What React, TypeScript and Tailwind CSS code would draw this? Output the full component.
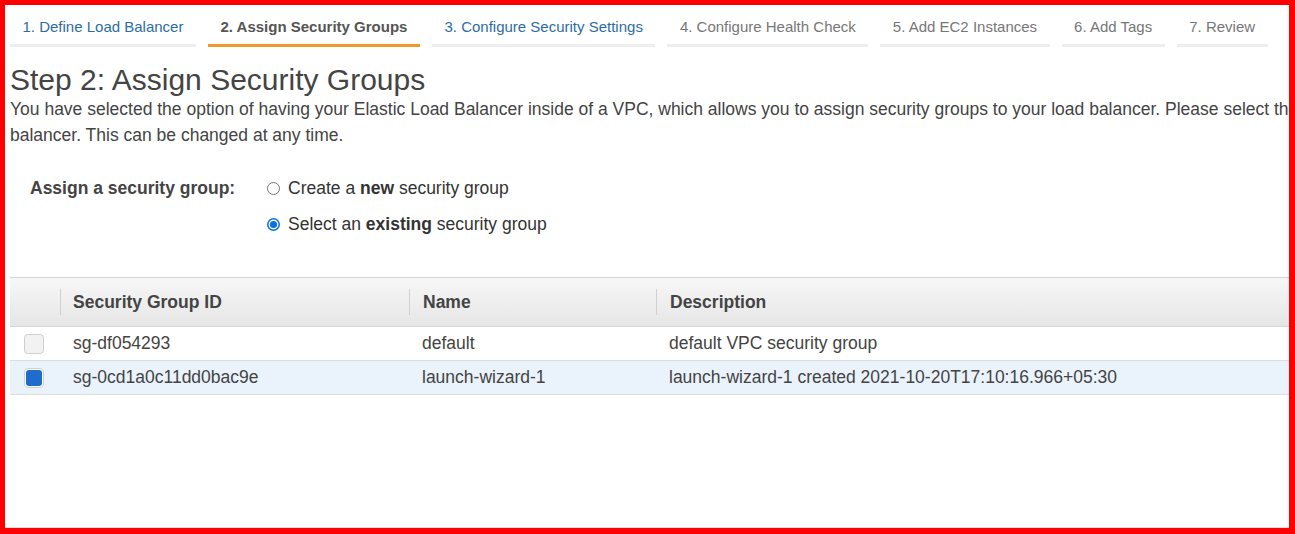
import React from 'react';

const tabs = [
  { label: '1. Define Load Balancer', state: 'link' },
  { label: '2. Assign Security Groups', state: 'active' },
  { label: '3. Configure Security Settings', state: 'link' },
  { label: '4. Configure Health Check', state: 'idle' },
  { label: '5. Add EC2 Instances', state: 'idle' },
  { label: '6. Add Tags', state: 'idle' },
  { label: '7. Review', state: 'idle' },
];

const rows = [
  { id: 'sg-df054293', name: 'default', desc: 'default VPC security group', checked: false },
  {
    id: 'sg-0cd1a0c11dd0bac9e',
    name: 'launch-wizard-1',
    desc: 'launch-wizard-1 created 2021-10-20T17:10:16.966+05:30',
    checked: true,
  },
];

function Radio({ checked }: { checked: boolean }) {
  return (
    <svg width="13" height="13" viewBox="0 0 13 13" className="shrink-0">
      {checked ? (
        <>
          <circle cx="6.5" cy="6.5" r="5.75" fill="white" stroke="#0b6fe0" strokeWidth="1.5" />
          <circle cx="6.5" cy="6.5" r="3.6" fill="#0b6fe0" />
        </>
      ) : (
        <circle cx="6.5" cy="6.5" r="6" fill="white" stroke="#767676" strokeWidth="1" />
      )}
    </svg>
  );
}

export default function App() {
  return (
    <div
      className="h-[534px] w-[1295px] border-[#ff0000] border-t-[5px] border-l-[5px] border-r-[6px] border-b-[6px] bg-white"
      style={{ fontFamily: '"Liberation Sans", Arial, sans-serif' }}
    >
      <div className="h-full w-full overflow-hidden border-b border-[#dcdcdc] pl-[5px]">
        {/* Wizard tabs */}
        <div className="flex gap-3">
          {tabs.map((t) => (
            <div
              key={t.label}
              className={
                'whitespace-nowrap px-[12.5px] pt-[12px] pb-[7px] text-[15px] leading-5 ' +
                (t.state === 'active'
                  ? 'border-b-[3px] border-[#ec9a2c] font-bold text-[#555]'
                  : t.state === 'link'
                  ? 'border-b-[3px] border-[#eeeeee] text-[#2e6da4]'
                  : 'border-b-[3px] border-[#eeeeee] text-[#777]')
              }
            >
              {t.label}
            </div>
          ))}
        </div>

        {/* Heading */}
        <div className="w-[1600px] text-[#444]">
          <h1 className="mt-[17px] text-[30px] leading-8">Step 2: Assign Security Groups</h1>
          <p className="text-[17.5px] leading-[26px]">
            You have selected the option of having your Elastic Load Balancer inside of a VPC, which allows you to assign
            security groups to your load balancer. Please select the security groups to assign to this load
            <br />
            balancer. This can be changed at any time.
          </p>
        </div>

        {/* Assign form */}
        <div className="mt-[22px] flex text-[17.5px] text-[#333]">
          <div className="w-[257px] pl-[20px] font-bold leading-9 text-[#444]">Assign a security group:</div>
          <div className="flex flex-col">
            <label className="flex h-9 items-center gap-2">
              <Radio checked={false} />
              <span>
                Create a <b>new</b> security group
              </span>
            </label>
            <label className="flex h-9 items-center gap-2">
              <Radio checked={true} />
              <span>
                Select an <b>existing</b> security group
              </span>
            </label>
          </div>
        </div>

        {/* Security group table */}
        <div className="mt-[35px] w-[1400px] text-[17.5px]">
          <div className="flex h-[50px] items-center border-t border-b border-[#d5d5d5] bg-gradient-to-b from-[#f7f7f7] to-[#e6e6e6] font-bold text-[#444]">
            <div className="w-[50px]" />
            <div className="flex h-full w-[349px] items-center">
              <span className="h-[26px] w-px bg-[#d0d0d0]" />
              <span className="pl-[12px]">Security Group ID</span>
            </div>
            <div className="flex h-full w-[247px] items-center">
              <span className="h-[26px] w-px bg-[#d0d0d0]" />
              <span className="pl-[13px]">Name</span>
            </div>
            <div className="flex h-full flex-1 items-center">
              <span className="h-[26px] w-px bg-[#d0d0d0]" />
              <span className="pl-[13px]">Description</span>
            </div>
          </div>
          {rows.map((r) => (
            <div
              key={r.id}
              className={
                'flex h-[34px] items-center border-b border-[#dddddd] text-[#444] ' +
                (r.checked ? 'bg-[#eaf3fc]' : 'bg-white')
              }
            >
              <div className="flex w-[50px] justify-center pr-[2px]">
                {r.checked ? (
                  <span className="flex h-5 w-5 items-center justify-center rounded-[4px] border border-[#c9d3de] bg-white">
                    <span className="h-[16px] w-[16px] rounded-[3px] bg-[#1f6ccb]" />
                  </span>
                ) : (
                  <span className="h-5 w-5 rounded-[4px] border border-[#cfcfcf] bg-[#f2f2f2]" />
                )}
              </div>
              <div className="w-[349px] pl-[13px]">{r.id}</div>
              <div className="w-[247px] pl-[13px]">{r.name}</div>
              <div className="flex-1 pl-[13px]">{r.desc}</div>
            </div>
          ))}
        </div>
      </div>
    </div>
  );
}
